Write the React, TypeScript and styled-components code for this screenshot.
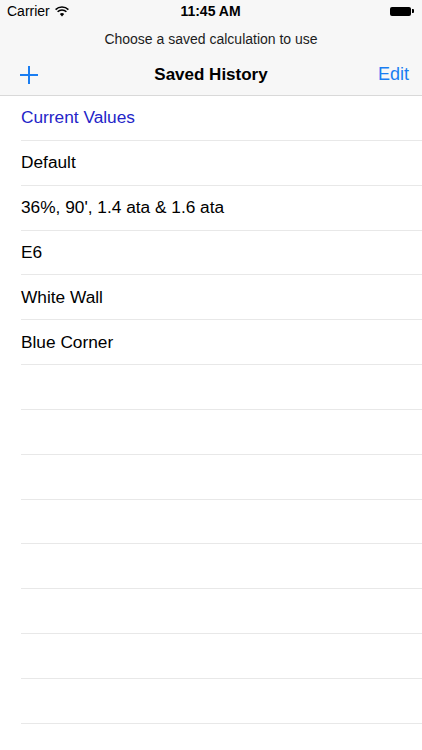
import styled, { createGlobalStyle } from "styled-components";

const GlobalStyle = createGlobalStyle`
    html, body {
        margin: 0;
        padding: 0;
        background: #ffffff;
    }
    body {
        font-family: "Liberation Sans", Arial, sans-serif;
        -webkit-font-smoothing: antialiased;
    }
`;

const Screen = styled.div`
    width: 422px;
    height: 750px;
    overflow: hidden;
    background: #ffffff;
    display: flex;
    flex-direction: column;
`;

const Header = styled.div`
    background: #f7f7f7;
    border-bottom: 1px solid #d9d9d9;
    display: flex;
    flex-direction: column;
`;

const StatusBar = styled.div`
    height: 22px;
    padding: 0 8px 0 7px;
    display: grid;
    grid-template-columns: 1fr auto 1fr;
    align-items: center;
    font-size: 14px;
    color: #000;
`;

const Carrier = styled.div`
    display: flex;
    align-items: center;
    gap: 5px;
`;

const Clock = styled.div`
    font-weight: bold;
`;

const Battery = styled.div`
    justify-self: end;
    display: flex;
    align-items: center;
`;

const BatteryBody = styled.div`
    width: 21px;
    height: 9px;
    background: #000;
    border-radius: 2px;
`;

const BatteryTip = styled.div`
    width: 2px;
    height: 4px;
    background: #000;
    margin-left: 1px;
    border-radius: 0 1px 1px 0;
`;

const Prompt = styled.div`
    height: 34px;
    display: flex;
    align-items: center;
    justify-content: center;
    font-size: 14px;
    color: #1c1c1c;
`;

const NavBar = styled.div`
    height: 39px;
    box-sizing: border-box;
    display: grid;
    grid-template-columns: 80px 1fr 80px;
    align-items: center;
    padding: 0 13px 2px;
`;

const PlusButton = styled.button`
    background: none;
    border: none;
    padding: 0;
    margin-left: 6px;
    width: 20px;
    height: 20px;
    display: flex;
    cursor: pointer;
`;

const Title = styled.div`
    text-align: center;
    font-size: 17px;
    font-weight: bold;
    color: #000;
`;

const EditButton = styled.button`
    justify-self: end;
    background: none;
    border: none;
    padding: 0;
    font-family: inherit;
    font-size: 18px;
    color: #1a7ef2;
    cursor: pointer;
`;

const List = styled.div`
    display: flex;
    flex-direction: column;
`;

const Row = styled.div`
    height: 44.85px;
    flex-shrink: 0;
    margin-left: 21px;
    border-bottom: 1px solid #e8e8e8;
    box-sizing: border-box;
    display: flex;
    align-items: center;
    font-size: 17.3px;
`;

const RowLabel = styled.span<{ $current?: boolean }>`
    color: ${(p) => (p.$current ? "#2424c8" : "#000")};
`;

const items = ["Default", "36%, 90', 1.4 ata & 1.6 ata", "E6", "White Wall", "Blue Corner"];

const WifiIcon = () => (
    <svg width="14" height="11" viewBox="0 0 14 11">
        <path d="M7 10.5 L4.8 8 A3.2 3.2 0 0 1 9.2 8 Z" fill="#000" />
        <path d="M2.6 5.8 A6.2 6.2 0 0 1 11.4 5.8" stroke="#000" strokeWidth="1.5" fill="none" />
        <path d="M0.6 3.6 A9 9 0 0 1 13.4 3.6" stroke="#000" strokeWidth="1.5" fill="none" />
    </svg>
);

const PlusIcon = () => (
    <svg width="20" height="20" viewBox="0 0 20 20">
        <path d="M10 1 V19 M1 10 H19" stroke="#1a7ef2" strokeWidth="2" fill="none" />
    </svg>
);

const App = () => {
    return (
        <Screen>
            <GlobalStyle />
            <Header>
                <StatusBar>
                    <Carrier>
                        Carrier
                        <WifiIcon />
                    </Carrier>
                    <Clock>11:45 AM</Clock>
                    <Battery>
                        <BatteryBody />
                        <BatteryTip />
                    </Battery>
                </StatusBar>
                <Prompt>Choose a saved calculation to use</Prompt>
                <NavBar>
                    <PlusButton>
                        <PlusIcon />
                    </PlusButton>
                    <Title>Saved History</Title>
                    <EditButton>Edit</EditButton>
                </NavBar>
            </Header>
            <List>
                <Row>
                    <RowLabel $current>Current Values</RowLabel>
                </Row>
                {items.map((item) => (
                    <Row key={item}>
                        <RowLabel>{item}</RowLabel>
                    </Row>
                ))}
                {Array.from({ length: 8 }).map((_, i) => (
                    <Row key={"empty-" + i} />
                ))}
            </List>
        </Screen>
    );
};

export default App;
